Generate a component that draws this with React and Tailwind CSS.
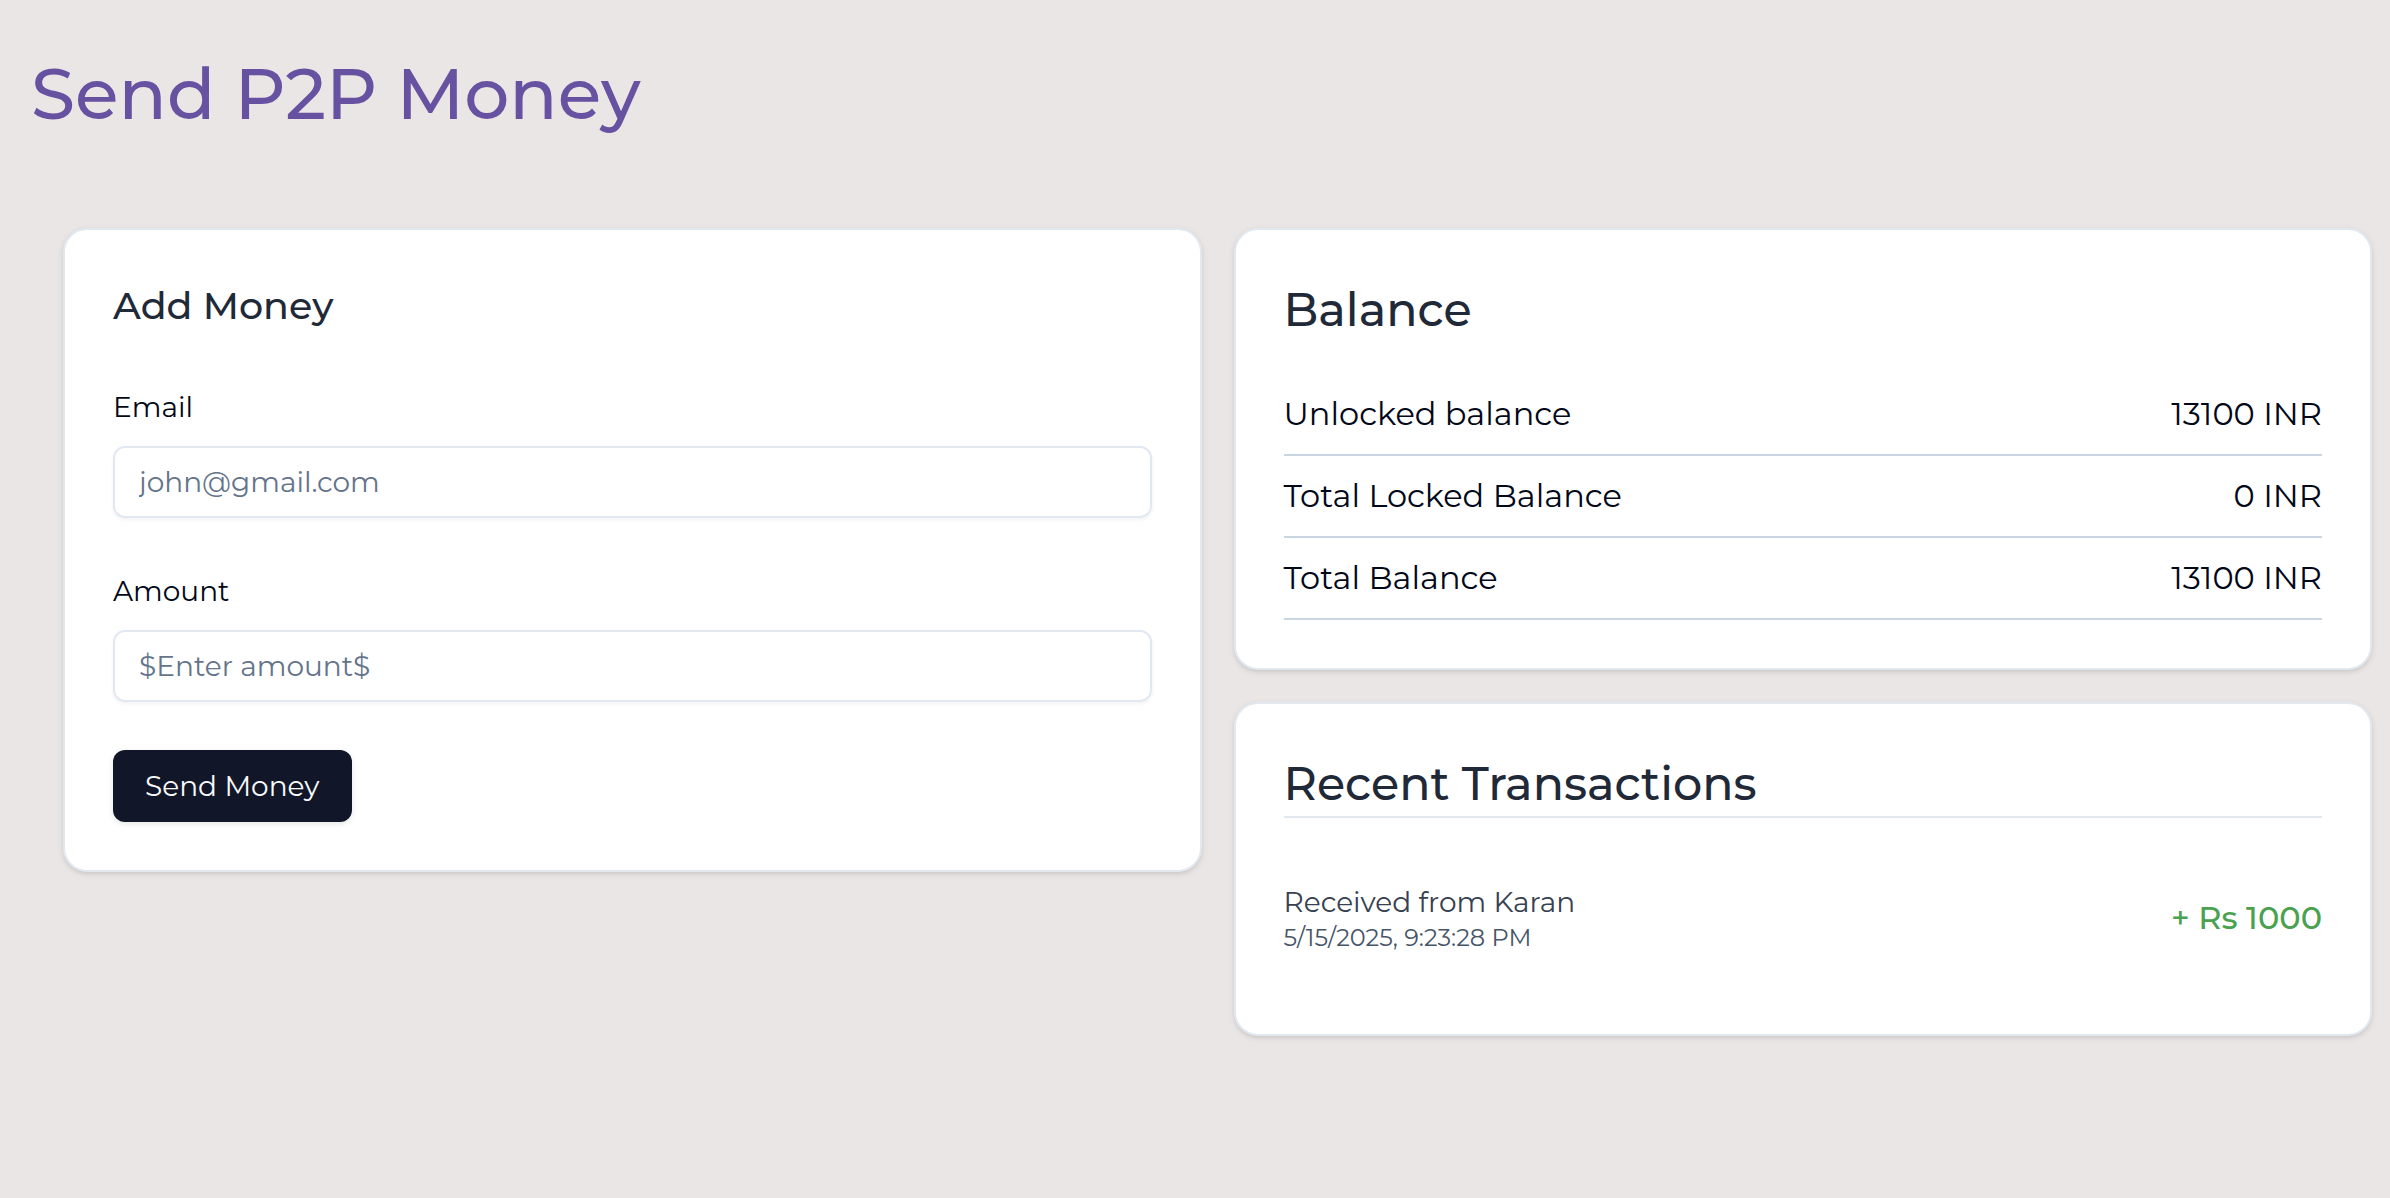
const card =
  "rounded-3xl border-2 border-slate-200 bg-white p-12 shadow-[0_2px_6px_rgba(0,0,0,0.1),0_2px_4px_-2px_rgba(0,0,0,0.1)]";

const heading = "text-[46px] leading-[64px] font-medium text-[#1f2937]";

const balances = [
  { label: "Unlocked balance", value: "13100 INR" },
  { label: "Total Locked Balance", value: "0 INR" },
  { label: "Total Balance", value: "13100 INR" },
];

const transactions = [
  { title: "Received from Karan", time: "5/15/2025, 9:23:28 PM", amount: "+ Rs 1000" },
];

function Field({ id, label, type, placeholder }) {
  return (
    <div className="flex flex-col gap-[22px]">
      <label htmlFor={id} className="text-[28px] leading-[34px]">
        {label}
      </label>
      <input
        id={id}
        type={type}
        placeholder={placeholder}
        className="h-[72px] w-full rounded-xl border-2 border-slate-200 bg-transparent px-6 text-[28px] shadow-[0_2px_4px_rgba(0,0,0,0.05)] placeholder:text-[#64748b]"
      />
    </div>
  );
}

function SendMoneyCard() {
  return (
    <form className={card} onSubmit={(e) => e.preventDefault()}>
      <h2 className="text-[38px] leading-[56px] font-medium text-[#1f2937]">Add Money</h2>
      <div className="mt-14 flex flex-col gap-14">
        <Field id="email" label="Email" type="email" placeholder="john@gmail.com" />
        <Field id="amount" label="Amount" type="text" placeholder="$Enter amount$" />
      </div>
      <button
        type="submit"
        className="mt-12 h-[72px] rounded-xl bg-[#111728] px-8 text-[28px] text-slate-50 shadow-[0_2px_6px_rgba(0,0,0,0.1)]"
      >
        Send Money
      </button>
    </form>
  );
}

function BalanceCard() {
  return (
    <section className={card}>
      <h2 className={heading}>Balance</h2>
      <dl className="mt-8 text-[32px] leading-[48px]">
        {balances.map((b) => (
          <div key={b.label} className="flex justify-between border-b-2 border-slate-300 py-4">
            <dt>{b.label}</dt>
            <dd>{b.value}</dd>
          </div>
        ))}
      </dl>
    </section>
  );
}

function TransactionsCard() {
  return (
    <section className={card}>
      <h2 className={`${heading} border-b-2 border-slate-200`}>Recent Transactions</h2>
      <ul className="pt-16 pb-8">
        {transactions.map((t) => (
          <li key={t.time} className="flex items-center justify-between">
            <div>
              <p className="text-[28px] leading-10 text-[#374151]">{t.title}</p>
              <p className="text-2xl text-[#475569]">{t.time}</p>
            </div>
            <p className="text-[32px] leading-[48px] font-medium text-[#4aa150]">{t.amount}</p>
          </li>
        ))}
      </ul>
    </section>
  );
}

export default function App() {
  return (
    <main className="min-h-screen bg-[#eae6e5] pt-[54px] pb-16 pl-[31px] font-[Montserrat,Inter,sans-serif] text-[#020817]">
      <h1 className="text-[71px] leading-[80px] font-medium text-[#6752a1]">Send P2P Money</h1>
      <div className="mt-[94px] grid grid-cols-2 items-start gap-8 pr-[18px] pl-8">
        <SendMoneyCard />
        <div className="flex flex-col gap-8">
          <BalanceCard />
          <TransactionsCard />
        </div>
      </div>
    </main>
  );
}
